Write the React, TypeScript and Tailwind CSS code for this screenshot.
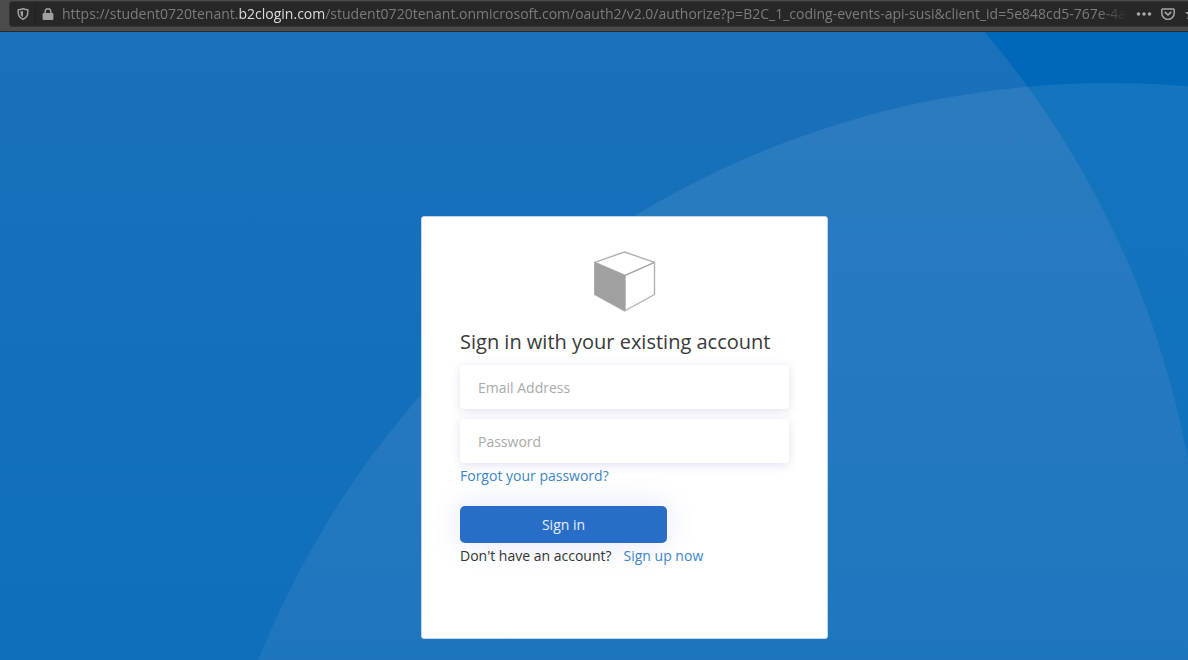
const linkClass = "text-[#3b85c8] hover:underline";

const inputClass =
  "h-11 w-full rounded bg-white px-[18px] text-sm text-[#333] shadow-[0_2px_10px_rgba(60,60,180,0.16)] outline-none placeholder:text-[#aaa]";

function ShieldIcon() {
  return (
    <svg className="h-3 w-3 shrink-0" viewBox="0 0 12 12" aria-hidden="true">
      <path
        d="M1.2 1.8C3 1.7 4.4 1.3 6 .8c1.600.5 3 .9 4.800 1v2.800c0 3.200-1.700 5.400-4.800 6.700C2.900 10 1.200 7.800 1.200 4.600z"
        fill="none"
        stroke="#a0a0a0"
        strokeWidth="1.500"
        strokeLinejoin="round"
      />
      <path d="M6 3v6.200C4.400 8.200 3.500 6.800 3.500 5V3.600C4.500 3.500 5.200 3.300 6 3z" fill="#a0a0a0" />
    </svg>
  );
}

function LockIcon() {
  return (
    <svg className="h-3 w-3 shrink-0" viewBox="0 0 12 12" aria-hidden="true">
      <path d="M3.200 6V3.600a2.800 2.800 0 0 1 5.600 0V6" fill="none" stroke="#a0a0a0" strokeWidth="1.500" />
      <rect x=".6" y="5" width="10.800" height="7" rx="1" fill="#a0a0a0" />
    </svg>
  );
}

function PocketIcon() {
  return (
    <svg className="h-3 w-3.5" viewBox="0 0 14 12" aria-hidden="true">
      <path
        d="M1.800.9h10.400a1 1 0 0 1 1 1v3.300a6.200 6.200 0 0 1-12.400 0V1.900a1 1 0 0 1 1-1z"
        fill="none"
        stroke="#a8a8a8"
        strokeWidth="1.500"
      />
      <path
        d="M4.200 4.300 7 7l2.800-2.700"
        fill="none"
        stroke="#a8a8a8"
        strokeWidth="1.700"
        strokeLinecap="round"
        strokeLinejoin="round"
      />
    </svg>
  );
}

function AddressBar() {
  return (
    <header className="flex h-8 shrink-0 items-start overflow-hidden border-b border-[#2b2b2b] bg-[#4b4b4b] pt-px pl-[9px]">
      <div className="flex h-[26px] min-w-0 flex-1 items-center rounded-l border-y border-l border-[#333] bg-[#272727] pl-[7px]">
        <ShieldIcon />
        <span className="ml-1.5 h-5 w-px shrink-0 bg-[#202020]" />
        <span className="ml-1.5 flex shrink-0">
          <LockIcon />
        </span>
        <div className="ml-2 min-w-0 flex-1 overflow-hidden font-['Open_Sans',sans-serif] text-sm leading-5 whitespace-nowrap text-[#7c7c7c] [mask-image:linear-gradient(to_right,black_calc(100%-30px),transparent)]">
          https://student0720tenant.<span className="text-[#dcdcdc]">b2clogin.com</span>
          /student0720tenant.onmicrosoft.com/oauth2/v2.0/authorize?p=B2C_1_coding-events-api-susi&amp;client_id=5e848cd5-767e-4a
        </div>
        <button type="button" aria-label="Page actions" className="ml-2 shrink-0">
          <svg className="h-3 w-4" viewBox="0 0 16 12" fill="#a8a8a8" aria-hidden="true">
            <circle cx="2.500" cy="6" r="1.800" />
            <circle cx="8" cy="6" r="1.800" />
            <circle cx="13.500" cy="6" r="1.800" />
          </svg>
        </button>
        <button type="button" aria-label="Save to Pocket" className="ml-[9px] shrink-0">
          <PocketIcon />
        </button>
        <button type="button" aria-label="Bookmark this page" className="ml-2.5 w-[3px] shrink-0 overflow-hidden">
          <svg className="h-3 w-3" viewBox="0 0 12 12" fill="#a8a8a8" aria-hidden="true">
            <path d="M6 0l1.700 3.900 4.300.3-3.200 2.800 1 4.200L6 9l-3.800 2.200 1-4.200L0 4.200l4.300-.3z" />
          </svg>
        </button>
      </div>
    </header>
  );
}

function Backdrop() {
  return (
    <svg
      className="absolute inset-0 h-full w-full"
      viewBox="0 32 1188 628"
      preserveAspectRatio="xMidYMid slice"
      aria-hidden="true"
    >
      <defs>
        <linearGradient id="arc-left" gradientUnits="userSpaceOnUse" x1="0" y1="32" x2="0" y2="660">
          <stop offset="0" stopColor="#ffb8d6" stopOpacity="0.1" />
          <stop offset="1" stopColor="#ffd0e0" stopOpacity="0.06" />
        </linearGradient>
        <linearGradient id="arc-right" gradientUnits="userSpaceOnUse" x1="0" y1="83" x2="0" y2="660">
          <stop offset="0" stopColor="#ffffff" stopOpacity="0.08" />
          <stop offset="1" stopColor="#fff4f4" stopOpacity="0.06" />
        </linearGradient>
      </defs>
      <circle cx="286" cy="626" r="917" fill="url(#arc-left)" />
      <circle cx="1110" cy="1000" r="917" fill="url(#arc-right)" />
    </svg>
  );
}

function CubeLogo() {
  return (
    <svg className="mx-auto block h-[61px] w-[62px]" viewBox="0 0 62 61" role="img" aria-label="Company logo">
      <path
        d="M.7 11.300 30.500 1l30 10.300v32.200L30.500 60 .7 43.500z"
        fill="#fff"
        stroke="#b0b0b0"
        strokeWidth="1.400"
        strokeLinejoin="round"
      />
      <path d="M.7 11.300 31 24.500V60L.7 43.500z" fill="#a0a0a0" />
      <path d="M.7 11.300 31 24.500l29.500-13.200M31 24.500V60" fill="none" stroke="#a4a4a4" strokeWidth="1.400" />
    </svg>
  );
}

export default function App() {
  return (
    <div className="flex min-h-screen flex-col bg-[#0068b8]">
      <AddressBar />
      <main className="relative flex flex-1 items-start justify-center overflow-hidden pt-[184px] pb-5 pl-[61px] font-['Open_Sans',sans-serif]">
        <Backdrop />
        <section className="relative w-[407px] rounded-[3px] border border-[#c5d5e8] bg-white px-[38px] pt-[34px] pb-[72px]">
          <CubeLogo />
          <form onSubmit={(event) => event.preventDefault()}>
            <h1 className="mt-4 text-xl leading-7 whitespace-nowrap text-[#3a3a3a]">Sign in with your existing account</h1>
            <div className="mt-[9px] flex flex-col gap-2.5">
              <input type="email" aria-label="Email Address" placeholder="Email Address" className={inputClass} />
              <input type="password" aria-label="Password" placeholder="Password" className={inputClass} />
            </div>
            <p className="mt-[3px] text-sm leading-5">
              <a href="#forgot" className={linkClass}>
                Forgot your password?
              </a>
            </p>
            <button
              type="submit"
              className="mt-5 block h-[37px] w-[207px] rounded-[5px] bg-[#286ec8] text-sm text-[#e6eefa] shadow-[0_0_30px_rgba(60,100,220,0.16)]"
            >
              Sign in
            </button>
          </form>
          <p className="mt-[3px] flex gap-3 text-sm leading-5 text-[#333]">
            Don't have an account?
            <a href="#signup" className={linkClass}>
              Sign up now
            </a>
          </p>
        </section>
      </main>
    </div>
  );
}
